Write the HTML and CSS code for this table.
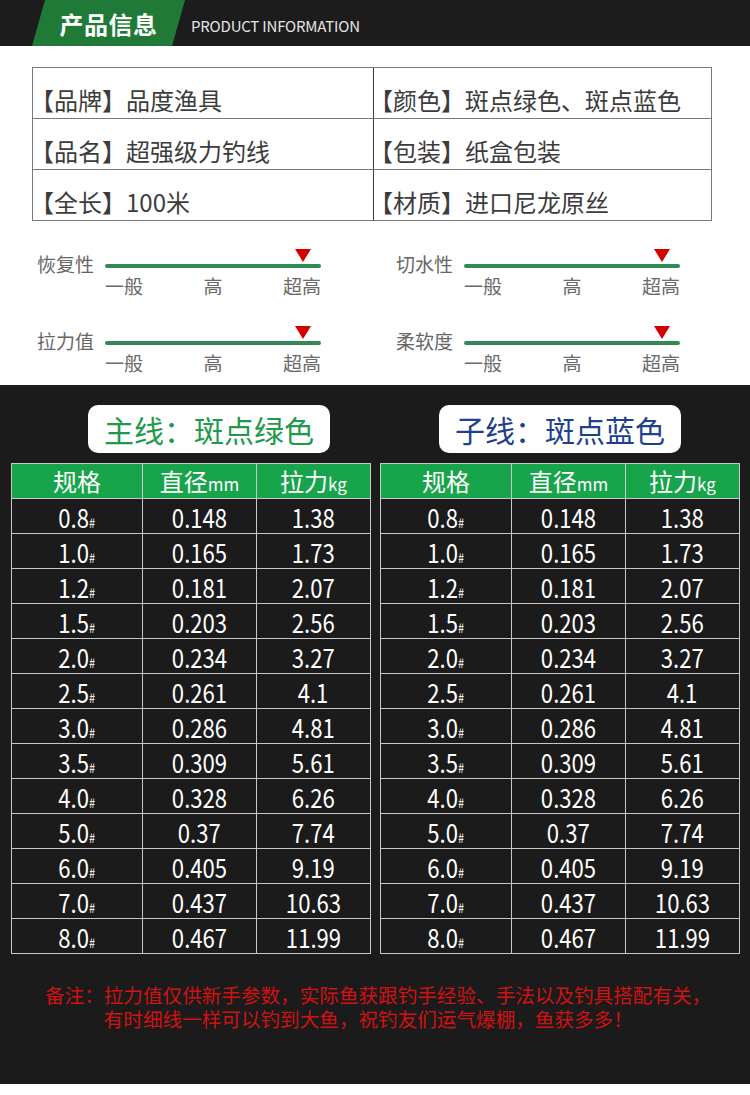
FILE: index.html
```html
<!DOCTYPE html>
<html lang="zh-CN">
<head>
<meta charset="utf-8">
<title>产品信息</title>
<link rel="stylesheet" href="styles.css">
</head>
<body>
<header class="topbar">
  <div class="tag"><span>产品信息</span></div>
  <span class="tag-en">PRODUCT INFORMATION</span>
</header>

<section class="info">
  <div class="info-grid">
    <div class="cell">【品牌】品度渔具</div>
    <div class="cell right">【颜色】斑点绿色、斑点蓝色</div>
    <div class="cell">【品名】超强级力钓线</div>
    <div class="cell right">【包装】纸盒包装</div>
    <div class="cell">【全长】100米</div>
    <div class="cell right">【材质】进口尼龙原丝</div>
  </div>
</section>

<section class="ratings">
  <div class="rate">
    <div class="marker"><i class="tri"></i></div>
    <div class="rlabel">恢复性</div>
    <div class="bar"></div>
    <div class="scale"><span>一般</span><span>高</span><span>超高</span></div>
  </div>
  <div class="rate">
    <div class="marker"><i class="tri"></i></div>
    <div class="rlabel">切水性</div>
    <div class="bar"></div>
    <div class="scale"><span>一般</span><span>高</span><span>超高</span></div>
  </div>
  <div class="rate">
    <div class="marker"><i class="tri"></i></div>
    <div class="rlabel">拉力值</div>
    <div class="bar"></div>
    <div class="scale"><span>一般</span><span>高</span><span>超高</span></div>
  </div>
  <div class="rate">
    <div class="marker"><i class="tri"></i></div>
    <div class="rlabel">柔软度</div>
    <div class="bar"></div>
    <div class="scale"><span>一般</span><span>高</span><span>超高</span></div>
  </div>
</section>

<section class="dark">
  <div class="pairs">
    <div class="pill green">主线：斑点绿色</div>
    <div class="pill blue">子线：斑点蓝色</div>
  </div>
  <div class="pairs tables">
    <table class="spec">
      <colgroup><col class="c1"><col class="c2"><col class="c3"></colgroup>
      <thead><tr><th>规格</th><th>直径<small>mm</small></th><th>拉力<small>kg</small></th></tr></thead>
      <tbody>
        <tr><td><span class="num">0.8<small>#</small></span></td><td><span class="num">0.148</span></td><td><span class="num">1.38</span></td></tr>
        <tr><td><span class="num">1.0<small>#</small></span></td><td><span class="num">0.165</span></td><td><span class="num">1.73</span></td></tr>
        <tr><td><span class="num">1.2<small>#</small></span></td><td><span class="num">0.181</span></td><td><span class="num">2.07</span></td></tr>
        <tr><td><span class="num">1.5<small>#</small></span></td><td><span class="num">0.203</span></td><td><span class="num">2.56</span></td></tr>
        <tr><td><span class="num">2.0<small>#</small></span></td><td><span class="num">0.234</span></td><td><span class="num">3.27</span></td></tr>
        <tr><td><span class="num">2.5<small>#</small></span></td><td><span class="num">0.261</span></td><td><span class="num">4.1</span></td></tr>
        <tr><td><span class="num">3.0<small>#</small></span></td><td><span class="num">0.286</span></td><td><span class="num">4.81</span></td></tr>
        <tr><td><span class="num">3.5<small>#</small></span></td><td><span class="num">0.309</span></td><td><span class="num">5.61</span></td></tr>
        <tr><td><span class="num">4.0<small>#</small></span></td><td><span class="num">0.328</span></td><td><span class="num">6.26</span></td></tr>
        <tr><td><span class="num">5.0<small>#</small></span></td><td><span class="num">0.37</span></td><td><span class="num">7.74</span></td></tr>
        <tr><td><span class="num">6.0<small>#</small></span></td><td><span class="num">0.405</span></td><td><span class="num">9.19</span></td></tr>
        <tr><td><span class="num">7.0<small>#</small></span></td><td><span class="num">0.437</span></td><td><span class="num">10.63</span></td></tr>
        <tr><td><span class="num">8.0<small>#</small></span></td><td><span class="num">0.467</span></td><td><span class="num">11.99</span></td></tr>
      </tbody>
    </table>
    <table class="spec">
      <colgroup><col class="c1"><col class="c2"><col class="c3"></colgroup>
      <thead><tr><th>规格</th><th>直径<small>mm</small></th><th>拉力<small>kg</small></th></tr></thead>
      <tbody>
        <tr><td><span class="num">0.8<small>#</small></span></td><td><span class="num">0.148</span></td><td><span class="num">1.38</span></td></tr>
        <tr><td><span class="num">1.0<small>#</small></span></td><td><span class="num">0.165</span></td><td><span class="num">1.73</span></td></tr>
        <tr><td><span class="num">1.2<small>#</small></span></td><td><span class="num">0.181</span></td><td><span class="num">2.07</span></td></tr>
        <tr><td><span class="num">1.5<small>#</small></span></td><td><span class="num">0.203</span></td><td><span class="num">2.56</span></td></tr>
        <tr><td><span class="num">2.0<small>#</small></span></td><td><span class="num">0.234</span></td><td><span class="num">3.27</span></td></tr>
        <tr><td><span class="num">2.5<small>#</small></span></td><td><span class="num">0.261</span></td><td><span class="num">4.1</span></td></tr>
        <tr><td><span class="num">3.0<small>#</small></span></td><td><span class="num">0.286</span></td><td><span class="num">4.81</span></td></tr>
        <tr><td><span class="num">3.5<small>#</small></span></td><td><span class="num">0.309</span></td><td><span class="num">5.61</span></td></tr>
        <tr><td><span class="num">4.0<small>#</small></span></td><td><span class="num">0.328</span></td><td><span class="num">6.26</span></td></tr>
        <tr><td><span class="num">5.0<small>#</small></span></td><td><span class="num">0.37</span></td><td><span class="num">7.74</span></td></tr>
        <tr><td><span class="num">6.0<small>#</small></span></td><td><span class="num">0.405</span></td><td><span class="num">9.19</span></td></tr>
        <tr><td><span class="num">7.0<small>#</small></span></td><td><span class="num">0.437</span></td><td><span class="num">10.63</span></td></tr>
        <tr><td><span class="num">8.0<small>#</small></span></td><td><span class="num">0.467</span></td><td><span class="num">11.99</span></td></tr>
      </tbody>
    </table>
  </div>
  <div class="note">
    <span class="note-head">备注：</span>
    <span class="note-body">拉力值仅供新手参数，实际鱼获跟钓手经验、手法以及钓具搭配有关，<br>有时细线一样可以钓到大鱼，祝钓友们运气爆棚，鱼获多多！</span>
  </div>
</section>
</body>
</html>
```

FILE: styles.css
```css
* { box-sizing: border-box; }

body {
  margin: 0;
  width: 750px;
  background: #ffffff;
  font-family: "Noto Sans CJK SC", "Noto Sans", sans-serif;
}

/* ---------- top bar ---------- */
.topbar {
  height: 46px;
  background: #1c1c1c;
  display: flex;
  align-items: center;
}
.tag {
  margin-left: 32px;
  width: 153px;
  height: 46px;
  background: #1f7a37;
  clip-path: polygon(13px 0, 100% 0, calc(100% - 13px) 100%, 0 100%);
  display: flex;
  align-items: center;
  justify-content: center;
  color: #ffffff;
  font-size: 24px;
  font-weight: 700;
  letter-spacing: 0.5px;
}
.tag-en {
  margin-left: 6px;
  padding-top: 4px;
  color: #e4e4e4;
  font-size: 15px;
  letter-spacing: -0.2px;
}

/* ---------- info table ---------- */
.info {
  padding: 21px 0 0 32px;
}
.info-grid {
  width: 680px;
  display: grid;
  grid-template-columns: 340px 1fr;
  border: 1px solid #7a7a7a;
  border-bottom: none;
}
.cell {
  height: 51px;
  padding: 20px 0 0 0;
  border-bottom: 1px solid #7a7a7a;
  font-size: 24px;
  line-height: 24px;
  color: #3c3c3c;
  text-indent: -3px;
  white-space: nowrap;
}
.cell.right {
  border-left: 1px solid #3a3a3a;
  text-indent: -5px;
}

/* ---------- ratings ---------- */
.ratings {
  padding: 28px 0 11px 37px;
  display: grid;
  grid-template-columns: 359px 285px;
  row-gap: 29px;
}
.rate {
  display: grid;
  grid-template-columns: 68px 216px;
  grid-template-rows: 15px 4px auto;
}
.marker {
  grid-column: 2;
  grid-row: 1;
  display: flex;
  justify-content: flex-end;
  padding-right: 10px;
}
.tri {
  width: 0;
  height: 0;
  border-left: 8px solid transparent;
  border-right: 8px solid transparent;
  border-top: 13px solid #d40000;
}
.rlabel {
  grid-column: 1;
  grid-row: 2;
  margin-top: -2px;
  font-size: 19px;
  line-height: 4px;
  color: #666666;
  white-space: nowrap;
}
.bar {
  grid-column: 2;
  grid-row: 2;
  background: #2f8a55;
  border-radius: 2px;
}
.scale {
  grid-column: 2;
  grid-row: 3;
  margin-top: 7px;
  display: flex;
  justify-content: space-between;
  font-size: 19px;
  line-height: 22px;
  color: #6a6a6a;
}

/* ---------- dark section ---------- */
.dark {
  height: 699px;
  background: #1b1b1b;
  padding: 20px 11px 0;
}
.pairs {
  display: grid;
  grid-template-columns: 359px 359px;
  column-gap: 10px;
}
.pill {
  width: 242px;
  height: 48px;
  border-radius: 10px;
  background: #ffffff;
  display: flex;
  align-items: center;
  justify-content: center;
  font-size: 30px;
}
.pill.green { margin-left: 77px; color: #1d9a4b; }
.pill.blue { margin-left: 59px; color: #203f90; }

.tables { margin-top: 10px; }

.spec {
  width: 359px;
  border-collapse: collapse;
  table-layout: fixed;
}
.spec .c1 { width: 131px; }
.spec .c2 { width: 114px; }
.spec .c3 { width: 114px; }
.spec th,
.spec td {
  border: 1px solid #c8c8c8;
  padding: 0;
  text-align: center;
  color: #ffffff;
  line-height: 20px;
}
.spec th {
  height: 35px;
  background: #17a44b;
  font-size: 24px;
  font-weight: 400;
}
.spec th small {
  font-size: 17px;
  line-height: 0;
}
.spec td {
  height: 35px;
}
.num {
  display: inline-block;
  font-size: 26px;
  line-height: 20px;
  vertical-align: middle;
  transform: scaleX(0.85);
}
.num small {
  font-size: 13px;
  line-height: 0;
}

/* ---------- note ---------- */
.note {
  margin: 29px 0 0 34px;
  display: flex;
  color: #d01212;
  font-size: 19.6px;
  line-height: 24px;
  white-space: nowrap;
}
```
